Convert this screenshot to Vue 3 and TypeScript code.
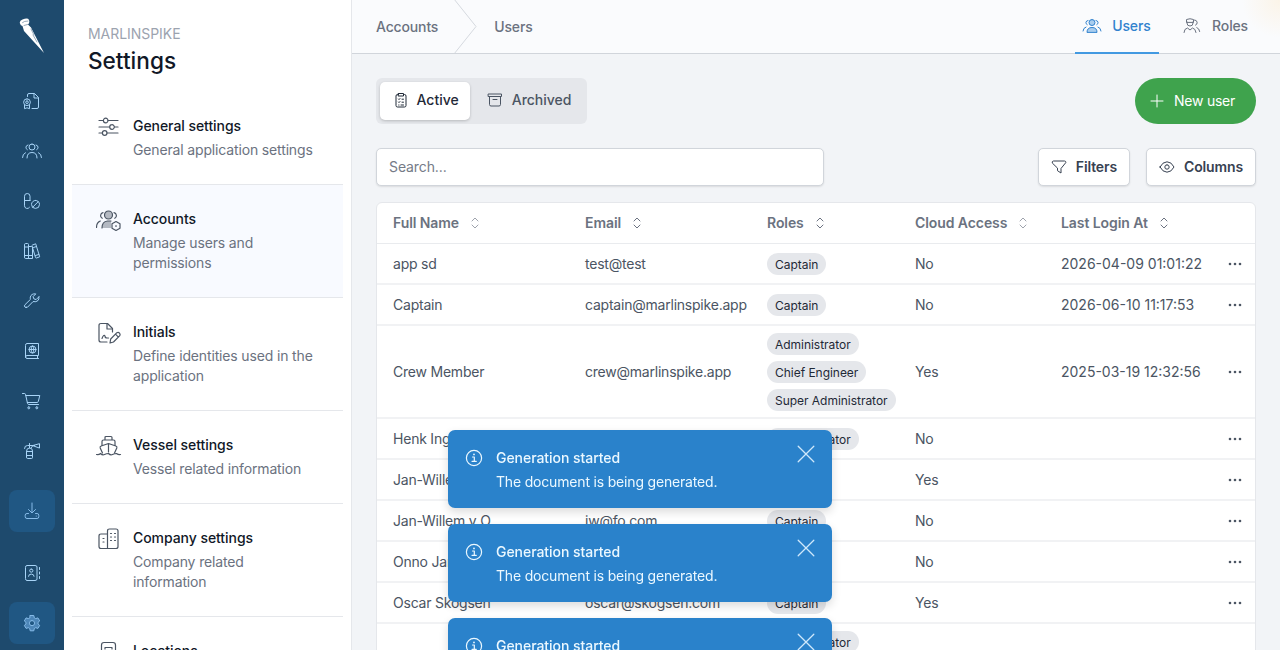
<template>
  <div class="app">
    <nav class="rail">
      <svg class="logo" width="26" height="36" viewBox="0 0 26 36">
        <path d="M1 5.500 Q0 3 3.500 1.500 Q9 -.5 10 2 Q11 5 9 6.500 L12 9.500 L25 35 L5 13 L3.500 8 Q1.500 7.500 1 5.500Z" fill="#fff" />
        <path d="M3.500 4.500 Q5 3 9 3 M5 7.500 L8.500 6.500 M12 11 L15 17 M14 17 L18 24" stroke="#6d879f" stroke-width=".7" fill="none" />
      </svg>
      <a
        v-for="item in railItems"
        :key="item.icon"
        class="rail-item"
        :class="{ active: item.active, spaced: item.spaced, bottom: item.bottom }"
      >
        <svg width="20" height="18" viewBox="0 0 20 18">
          <path v-if="item.shade" :d="item.shade" class="shade" />
          <path v-for="(d, i) in icons[item.icon]" :key="i" :d="d" />
        </svg>
      </a>
    </nav>

    <aside class="settings">
      <div class="settings-head">
        <div class="brand">MARLINSPIKE</div>
        <h1>Settings</h1>
      </div>
      <a v-for="s in sections" :key="s.title" class="section" :class="{ current: s.current }">
        <svg width="26" height="24" viewBox="0 0 26 24">
          <path v-if="s.shade" :d="s.shade" class="shade" />
          <path v-for="(d, i) in icons[s.icon]" :key="i" :d="d" />
        </svg>
        <div class="section-text">
          <strong>{{ s.title }}</strong>
          <p>{{ s.text }}</p>
        </div>
      </a>
    </aside>

    <main class="main">
      <header class="topbar">
        <span class="crumb">Accounts</span>
        <svg class="chevron" width="24" height="53" viewBox="0 0 24 53">
          <path d="M1 -1 L23 26.500 L1 54" />
        </svg>
        <span class="crumb">Users</span>
        <div class="tabs">
          <a class="tab selected">
            <svg width="20" height="16" viewBox="0 0 20 16">
              <path class="tint" d="M10 1.500a3 3 0 1 1 0 6 3 3 0 0 1 0-6M5 14q0-4.500 5-4.500t5 4.500z" />
              <path v-for="(d, i) in icons.team" :key="i" :d="d" />
            </svg>
            Users
          </a>
          <a class="tab">
            <svg width="20" height="16" viewBox="0 0 20 16">
              <path v-for="(d, i) in icons.roles" :key="i" :d="d" />
            </svg>
            Roles
          </a>
        </div>
      </header>

      <div class="content">
        <div class="toolbar">
          <div class="switch">
            <button class="on">
              <svg width="14" height="16" viewBox="0 0 14 16">
                <path v-for="(d, i) in icons.clipboard" :key="i" :d="d" />
              </svg>
              Active
            </button>
            <button>
              <svg width="16" height="16" viewBox="0 0 16 16">
                <path v-for="(d, i) in icons.archive" :key="i" :d="d" />
              </svg>
              Archived
            </button>
          </div>
          <button class="new-user">
            <svg width="14" height="14" viewBox="0 0 14 14"><path d="M7 1v12M1 7h12" /></svg>
            New user
          </button>
        </div>

        <div class="toolbar filters">
          <input class="search" type="text" placeholder="Search..." />
          <div class="buttons">
            <button class="plain">
              <svg width="16" height="16" viewBox="0 0 16 16"><path :d="icons.filter[0]" /></svg>
              Filters
            </button>
            <button class="plain">
              <svg width="16" height="16" viewBox="0 0 16 16">
                <path v-for="(d, i) in icons.eye" :key="i" :d="d" />
              </svg>
              Columns
            </button>
          </div>
        </div>

        <div class="table">
          <div class="row head">
            <div v-for="c in columns" :key="c.label" class="cell">
              {{ c.label }}
              <svg :class="{ faint: c.faint }" width="8" height="12" viewBox="0 0 8 12">
                <path d="M1 4 L4 1 L7 4 M1 8 L4 11 L7 8" />
              </svg>
            </div>
          </div>
          <div v-for="(u, i) in users" :key="i" class="row">
            <div class="cell tight">{{ u.name }}</div>
            <div class="cell tight">{{ u.email }}</div>
            <div class="cell roles">
              <span v-for="r in u.roles" :key="r" class="badge">{{ r }}</span>
            </div>
            <div class="cell tight">{{ u.cloud }}</div>
            <div class="cell">{{ u.login }}</div>
            <div class="cell more">
              <svg width="14" height="4" viewBox="0 0 14 4">
                <circle cx="2" cy="2" r="1.300" /><circle cx="7" cy="2" r="1.300" /><circle cx="12" cy="2" r="1.300" />
              </svg>
            </div>
          </div>
        </div>
      </div>
    </main>

    <div class="toasts">
      <div v-for="n in 3" :key="n" class="toast">
        <svg class="info" width="18" height="18" viewBox="0 0 18 18">
          <circle cx="9" cy="9" r="7.600" />
          <path d="M7.500 8h1.800v4M7 12.300h4.300" />
          <circle class="dot" cx="9" cy="5.400" r=".9" />
        </svg>
        <div class="toast-text">
          <strong>Generation started</strong>
          <p>The document is being generated.</p>
        </div>
        <svg class="close" width="18" height="18" viewBox="0 0 18 18">
          <path d="M1.200 1.200 L16.800 16.800 M16.800 1.200 L1.200 16.800" />
        </svg>
      </div>
    </div>
  </div>
</template>

<script setup lang="ts">
import { ref } from 'vue'

interface RailItem {
  icon: string
  active?: boolean
  spaced?: boolean
  bottom?: boolean
  shade?: string
}

interface Section {
  title: string
  text: string
  icon: string
  current?: boolean
  shade?: string
}

interface User {
  name: string
  email: string
  roles: string[]
  cloud: string
  login: string
}

const icons: Record<string, string[]> = {
  certificate: [
    'M5.500 4.500V3q0-1.500 1.500-1.500h5.500l4 4V15q0 1.500-1.500 1.500h-5',
    'M12 1.500V6h4.500',
    'M5 6.800a3.400 3.400 0 1 1 0 6.800 3.400 3.400 0 0 1 0-6.800',
    'M5 8.900a1.300 1.300 0 1 1 0 2.600 1.300 1.300 0 0 1 0-2.600',
    'M2.500 13v3.700L5 15.800l2.500.9V13'
  ],
  users: [
    'M10 2a3 3 0 1 1 0 6 3 3 0 0 1 0-6',
    'M6 3a2.500 2.500 0 0 0-.7 4.700M14 3a2.500 2.500 0 0 1 .7 4.700',
    'M5 16q0-5.500 5-5.500t5 5.500',
    'M.5 15.500q0-3.500 3-4.800M19.500 15.500q0-3.500-3-4.800'
  ],
  pills: [
    'M8 8.500V4.250a2.750 2.750 0 0 0-5.500 0v9.500a2.750 2.750 0 0 0 5 1.600M2.500 8.500H8',
    'M13.500 8.400a4 4 0 1 1 0 8 4 4 0 0 1 0-8M10.700 15.200l5.600-5.600'
  ],
  books: [
    'M2.500 2.500q0-1 1-1h2q1 0 1 1v14h-3q-1 0-1-1zM2.500 5h4M2.500 13.500h4',
    'M6.500 4.500h3q1 0 1 1v11h-4M6.500 13.500h4',
    'M10.500 3l3.200-1.200 4 13-3.200 1.200q-.8.200-1-.6L10 4M11.500 5.500l3-1M13.500 13.500l3.300-1'
  ],
  wrench: [
    'M16.900 4.800l-2.800 2.800-2.300-.8-.7-2.200 2.700-2.700q-4.600-.5-5.500 3.200-.2 1.300.2 2.200l-5.600 5.500q-1 1 0 2.200t2.600.2l5.500-5.600q3.200.7 5-1.100 1.300-1.500.9-3.500z',
    'M4.200 15h.1'
  ],
  passport: [
    'M3.500 3q0-1.500 1.500-1.500h11.500v12H5q-1.500 0-1.500 1.500zM3.500 15q0 1.500 1.500 1.500h11.500M15.500 13.500v3',
    'M10.500 4a3.500 3.500 0 1 1 0 7 3.500 3.500 0 0 1 0-7M7 7.500h7M10.500 4q-3 3.500 0 7M10.500 4q3 3.500 0 7'
  ],
  cart: [
    'M.5 1.500h2q.8 0 1 .8l2 9q.2 1.200 1.300 1.200h9.700',
    'M3.800 3.500h14l-1.500 6q-.3 1-1.300 1H5.300',
    'M6.800 14.800a1 1 0 1 1 0 2 1 1 0 0 1 0-2M14.800 14.800a1 1 0 1 1 0 2 1 1 0 0 1 0-2'
  ],
  extinguisher: [
    'M4.500 9q0-3 3-3t3 3v6.500q0 1-1 1h-4q-1 0-1-1zM4.500 9.500h6M4.500 13.500h6',
    'M7.500 6V1.500M2.500 6.500q0-3 3-3h7M11 3.500l6.500-1.800v4zM9 6l2-2.500'
  ],
  download: [
    'M10 1v9.500M6.500 7.500l3.500 3.500 3.500-3.500',
    'M6.500 11.500H5q-1.800 0-1.800 1.700v1.600q0 1.700 1.800 1.700h10q1.800 0 1.800-1.700v-1.600q0-1.700-1.800-1.700h-1.500M14.200 14.100h.1'
  ],
  contacts: [
    'M3.500 3q0-1.500 1.500-1.500h8q2 0 2 1.500v12q0 1.500-2 1.500H5q-1.500 0-1.500-1.500z',
    'M9.300 5a1.600 1.600 0 1 1 0 3.200 1.600 1.600 0 0 1 0-3.200M6.500 12.300q0-2.200 2.800-2.200t2.800 2.200M17.500 3.500v2M17.500 8v2M17.500 12.500v2'
  ],
  gear: [
    'M8.200 1.500h3.600l.5 2.300 1.400.8 2.200-.7 1.800 3-1.700 1.500v1.500l1.700 1.500-1.800 3-2.200-.7-1.400.8-.5 2.300H8.200l-.5-2.300-1.400-.8-2.200.7-1.800-3L4 9.900V8.400L2.300 6.900l1.800-3 2.200.7 1.400-.8z',
    'M10 6.500a2.600 2.600 0 1 1 0 5.200 2.600 2.600 0 0 1 0-5.200'
  ],
  sliders: [
    'M3 5.500h4.300M12 5.500h10M3 12h10.500M18.500 12H22M3 18h3.500M11 18h11',
    'M9.700 3.200a2.300 2.300 0 1 1 0 4.600 2.300 2.300 0 0 1 0-4.600M16 9.700a2.300 2.300 0 1 1 0 4.600 2.300 2.300 0 0 1 0-4.600M8.700 15.700a2.300 2.300 0 1 1 0 4.600 2.300 2.300 0 0 1 0-4.600'
  ],
  accounts: [
    'M12.500 3a4 4 0 1 1 0 8 4 4 0 0 1 0-8',
    'M7 4.700a3 3 0 0 0-.8 5.600M18 4.700a3 3 0 0 1 .8 5.600',
    'M.5 19.500q0-5 3.800-6.500M6 20q0-6.500 5.500-7h3.500',
    'M20 13.500l4 2.200v4.600l-4 2.200-4-2.200v-4.600zM20 17.500v1'
  ],
  initials: [
    'M16.500 11V7.500L11.500 2.500H5q-2 0-2 2v14.500q0 2 2 2h6',
    'M11 2.800V8h5.300M6 17.500q1.500-4.500 3-2.500 0 2 2 2h1.500',
    'M14 22l.7-4 6.200-6.300q1.500-.8 2.600.4t.3 2.600L17.500 21zM19.500 13.200l2.900 2.900'
  ],
  vessel: [
    'M9 6V3.500q0-1 1-1h5q1 0 1 1V6M6 11.500V7.500q0-1.500 1.500-1.500h10q1.500 0 1.500 1.500v4',
    'M6.500 19l-2.300-5q-.5-1.500 1-2l7.300-2.500 7.300 2.500q1.500.5 1 2l-2.300 5M12.500 9.500V18',
    'M.5 20.500q2.500.5 4-1 2 2 4 1t4-1q2 2 4 1t4-1q2 1.500 4 1'
  ],
  company: [
    'M11.500 21.500V4q0-2 2-2h6.500q2 0 2 2v15.500q0 2-2 2H5q-2 0-2-2V9q0-2 2-2h6.500',
    'M14.500 6.500h1M18.500 6.500h1M14.500 10h1M18.500 10h1M14.500 13.500h1M18.500 13.500h1M7 11.500h1M7 15h1'
  ],
  location: [
    'M5.500 22V5q0-2.500 2.500-2.500h9q2.500 0 2.500 2.500v17M9 9V7.500h7V9'
  ],
  team: [
    'M10 1.500a3 3 0 1 1 0 6 3 3 0 0 1 0-6',
    'M6 2.500a2.200 2.200 0 0 0-.8 4.200M14 2.500a2.200 2.200 0 0 1 .8 4.200',
    'M5 14q0-4.500 5-4.500t5 4.500zM1 13q.2-3.200 3-4M19 13q-.2-3.200-3-4'
  ],
  roles: [
    'M4.500 4V1.500q3.500-1.500 7 0V4zM5 4v1q0 3 3 3t3-3V4',
    'M12.500 2a2.700 2.700 0 0 1 1 5.200M2 14.500q.2-4 3.500-4.500l2.500 2 2.500-2q3 .5 3.500 4.500M14.800 9.500q2.600 1 2.900 4'
  ],
  clipboard: [
    'M4.500 2.500H3.500q-1.500 0-1.500 1.500v9.500Q2 15 3.500 15h7q1.500 0 1.500-1.500V4q0-1.500-1.500-1.500H9.500M4.500 1.500h5v2.500h-5z',
    'M4.500 7l.5.600L6 6.500M8 7.200h1.500M4.500 10l.5.600L6 9.500M8 10.200h1.500M4.700 13h.3M7 13h2.500'
  ],
  archive: ['M1.500 2h13v2.500h-13z', 'M2.500 4.500v8q0 1.500 1.500 1.500h8q1.500 0 1.500-1.500v-8M6 7.500h4'],
  filter: ['M1.200 3.600Q1 2 2.500 2h11q1.500 0 1.300 1.600L10 9.500V14l-3.500-2.300V9.500z'],
  eye: [
    'M1 8q2.600-5.200 7-5.200T15 8q-2.600 5.200-7 5.200T1 8z',
    'M8 5.800a2.200 2.200 0 1 1 0 4.400 2.200 2.200 0 0 1 0-4.400'
  ]
}

const railItems = ref<RailItem[]>([
  { icon: 'certificate' },
  { icon: 'users' },
  { icon: 'pills' },
  { icon: 'books' },
  { icon: 'wrench' },
  { icon: 'passport' },
  { icon: 'cart' },
  { icon: 'extinguisher' },
  { icon: 'download', active: true, spaced: true },
  { icon: 'contacts', bottom: true },
  { icon: 'gear', active: true, shade: icons.gear.join('') }
])

const sections = ref<Section[]>([
  { title: 'General settings', text: 'General application settings', icon: 'sliders' },
  {
    title: 'Accounts',
    text: 'Manage users and permissions',
    icon: 'accounts',
    current: true,
    shade: 'M12.500 3a4 4 0 1 1 0 8 4 4 0 0 1 0-8M6 20q0-6.500 5.500-7h3.500v7z'
  },
  { title: 'Initials', text: 'Define identities used in the application', icon: 'initials' },
  { title: 'Vessel settings', text: 'Vessel related information', icon: 'vessel' },
  { title: 'Company settings', text: 'Company related information', icon: 'company' },
  { title: 'Locations', text: 'Manage locations', icon: 'location' }
])

const columns = [
  { label: 'Full Name', faint: true },
  { label: 'Email', faint: false },
  { label: 'Roles', faint: false },
  { label: 'Cloud Access', faint: true },
  { label: 'Last Login At', faint: false }
]

const users = ref<User[]>([
  { name: 'app sd', email: 'test@test', roles: ['Captain'], cloud: 'No', login: '2026-04-09 01:01:22' },
  { name: 'Captain', email: 'captain@marlinspike.app', roles: ['Captain'], cloud: 'No', login: '2026-06-10 11:17:53' },
  {
    name: 'Crew Member',
    email: 'crew@marlinspike.app',
    roles: ['Administrator', 'Chief Engineer', 'Super Administrator'],
    cloud: 'Yes',
    login: '2025-03-19 12:32:56'
  },
  { name: 'Henk Ingen', email: '', roles: ['Administrator'], cloud: 'No', login: '' },
  { name: 'Jan-Willem', email: '', roles: [], cloud: 'Yes', login: '' },
  { name: 'Jan-Willem v O', email: 'jw@fo.com', roles: ['Captain'], cloud: 'No', login: '' },
  { name: 'Onno Jansen', email: '', roles: [], cloud: 'No', login: '' },
  { name: 'Oscar Skogsen', email: 'oscar@skogsen.com', roles: ['Captain'], cloud: 'Yes', login: '' },
  { name: '', email: '', roles: ['Administrator', 'Chief Engineer', 'Captain'], cloud: '', login: '' }
])
</script>

<style>
body {
  margin: 0;
  overflow: hidden;
}
</style>

<style scoped>
.app {
  display: flex;
  height: 650px;
  overflow: hidden;
  font-family: Inter, "Liberation Sans", sans-serif;
  font-size: 14px;
  line-height: 20px;
  color: #4b5563;
}

* {
  box-sizing: border-box;
}

svg {
  flex: none;
  fill: none;
  stroke: currentColor;
  stroke-width: 1;
  stroke-linecap: round;
  stroke-linejoin: round;
}

button {
  display: flex;
  align-items: center;
  border: 0;
  background: none;
  font: inherit;
  color: inherit;
}

p,
h1 {
  margin: 0;
}

/* left icon rail */
.rail {
  display: flex;
  flex-direction: column;
  align-items: center;
  gap: 8px;
  width: 64px;
  padding-top: 18px;
  background: #1e4a6d;
  color: #a8d4f7;
  flex: none;
}

.logo {
  margin-bottom: 18px;
  stroke: none;
}

.rail-item {
  display: flex;
  align-items: center;
  justify-content: center;
  width: 46px;
  height: 42px;
  border-radius: 8px;
  flex: none;
}

.rail-item.active {
  background: #205783;
  color: #86bbe8;
}

.rail-item .shade {
  fill: #4d86b8;
  fill-rule: evenodd;
  stroke: none;
}

.rail-item.spaced {
  margin-top: 10px;
}

.rail-item.bottom {
  margin-top: 12px;
}

/* settings panel */
.settings {
  width: 288px;
  padding: 24px 8px 0;
  background: #fff;
  border-right: 1px solid #e5e7eb;
  flex: none;
}

.settings-head {
  height: 68px;
  padding-left: 16px;
}

.brand {
  color: #9ca3af;
  letter-spacing: -0.05px;
}

h1 {
  margin-top: 2px;
  font-size: 22.600px;
  line-height: 30px;
  font-weight: 500;
  color: #111827;
}

.section {
  display: flex;
  padding: 24px 27px 24px 24px;
  border-bottom: 1px solid #e5e7eb;
}

.section svg {
  margin: -1px 11px -1px 0;
  stroke-width: 1.200;
}

.section .shade {
  fill: #b4b9c2;
  stroke: none;
}

.section.current {
  background: #f8faff;
}

.section strong {
  display: block;
  font-weight: 500;
  letter-spacing: -0.06px;
  color: #111827;
}

.section p {
  margin-top: 4px;
  letter-spacing: -0.150px;
  color: #6b7280;
}

/* main area */
.main {
  flex: 1;
  background: #f2f4f7;
}

.topbar {
  display: flex;
  align-items: center;
  height: 54px;
  padding-left: 24px;
  border-bottom: 1px solid #d1d5db;
  background: radial-gradient(circle at 100% 0, #fbf4e8 0, #fafbfd 38px);
  color: #6b7280;
  font-weight: 500;
  letter-spacing: -0.150px;
}

.chevron {
  margin: 0 17px 0 15px;
  color: #d5d9df;
}

.tabs {
  display: flex;
  gap: 16px;
  height: 54px;
  margin-left: auto;
  padding-right: 24px;
}

.tab {
  display: flex;
  align-items: center;
  gap: 10px;
  padding: 0 8px 2px 7px;
}

.tab.selected {
  padding-bottom: 0;
  padding-right: 8.500px;
  color: #3182ce;
  border-bottom: 2px solid #4299e1;
}

.tint {
  fill: #a9cdee;
  stroke: none;
}

.content {
  padding: 24px;
}

.toolbar {
  display: flex;
  justify-content: space-between;
}

.switch {
  display: flex;
  height: 46px;
  padding: 4px;
  border-radius: 6px;
  background: #e5e7eb;
  font-weight: 500;
  letter-spacing: -0.320px;
}

.switch button {
  gap: 9px;
  padding: 0 11.500px 2px 17px;
}

.switch .on {
  padding-right: 11px;
  padding-left: 13.500px;
  background: #fff;
  color: #1f2937;
  border-radius: 5px;
  box-shadow: 0 1px 3px rgba(0, 0, 0, 0.2);
}

.new-user {
  gap: 10px;
  height: 46px;
  padding: 0 21px 0 15px;
  border-radius: 23px;
  background: #3fa34d;
  color: #fff;
  letter-spacing: -0.250px;
}

.filters {
  margin-top: 24px;
}

.search {
  width: 448px;
  height: 38px;
  padding: 0 12px 2px;
  border: 1px solid #d1d5db;
  border-radius: 5px;
  background: #fff;
  font: inherit;
  letter-spacing: -0.100px;
  box-shadow: 0 1px 2px rgba(0, 0, 0, 0.1);
}

.search::placeholder {
  color: #757b87;
}

.buttons {
  display: flex;
  gap: 16px;
}

.plain {
  gap: 9px;
  height: 38px;
  padding: 0 12px;
  border: 1px solid #d1d5db;
  border-radius: 5px;
  background: #fff;
  color: #374151;
  font-weight: 600;
  letter-spacing: -0.130px;
  box-shadow: 0 1px 2px rgba(0, 0, 0, 0.1);
}

.table {
  margin-top: 16px;
  border: 1px solid #e5e7eb;
  border-radius: 6px;
  background: #fff;
}

.row {
  display: grid;
  grid-template-columns: 192px 182px 148px 146px 172px 38px;
  align-items: center;
  min-height: 41px;
  padding-top: 1px;
  border-bottom: 2px solid #f1f2f4;
}

.row.head {
  height: 41px;
  padding: 0;
  border-bottom: 1px solid #e9ebee;
  font-weight: 600;
  letter-spacing: -0.080px;
  color: #6b7280;
}

.cell {
  padding-left: 16px;
  white-space: nowrap;
}

.cell.tight {
  letter-spacing: -0.220px;
}

.head .cell {
  display: flex;
  align-items: center;
  gap: 12px;
}

.faint {
  opacity: 0.65;
}

.roles {
  display: flex;
  flex-direction: column;
  align-items: flex-start;
  gap: 6px;
}

.roles:has(.badge + .badge) {
  padding-top: 6px;
  padding-bottom: 6px;
}

.badge {
  padding: 2px 8px 0;
  border-radius: 11px;
  background: #e5e7eb;
  color: #1f2937;
  font-size: 12px;
  letter-spacing: -0.030px;
}

.cell.more {
  display: flex;
  padding-left: 11px;
}

.more svg {
  fill: #4b5563;
  stroke: none;
}

/* notifications float over the table */
.toasts {
  position: fixed;
  top: 430px;
  left: 448px;
  display: flex;
  flex-direction: column;
  gap: 16px;
  width: 384px;
}

.toast {
  display: flex;
  align-items: flex-start;
  height: 78px;
  padding: 18px 17px;
  border-radius: 7px;
  background: #2a82cb;
  color: #ebf8ff;
  box-shadow: 0 4px 10px rgba(0, 0, 0, 0.14);
}

.info {
  margin-top: 1px;
  stroke-width: 1.200;
}

.info .dot {
  fill: currentColor;
  stroke: none;
}

.toast-text {
  flex: 1;
  padding-left: 13px;
}

.toast strong {
  display: block;
  font-weight: 500;
  letter-spacing: -0.050px;
}

.toast p {
  margin-top: 4px;
  letter-spacing: -0.180px;
}

.close {
  margin-top: -3px;
  stroke-width: 1.300;
  color: #cfe8fb;
}
</style>
